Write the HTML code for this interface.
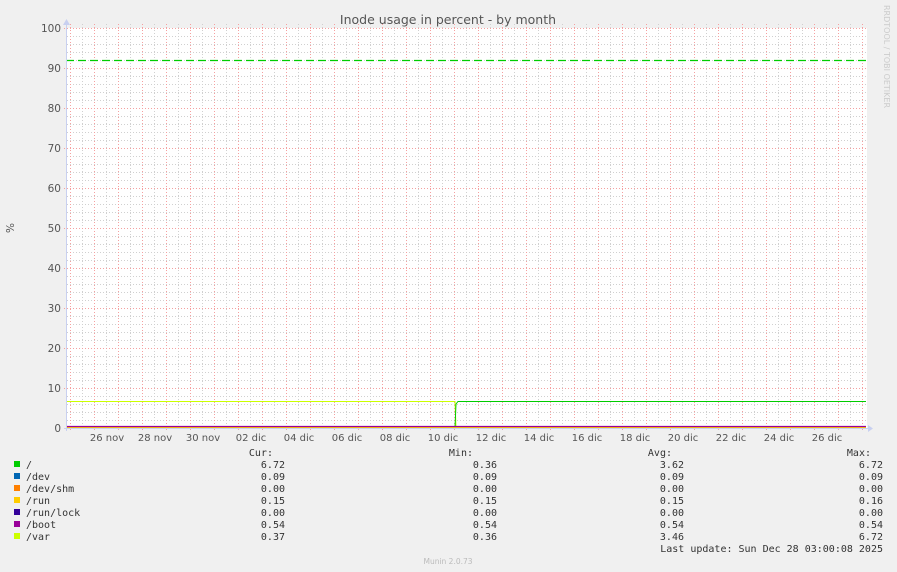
<!DOCTYPE html>
<html><head><meta charset="utf-8"><style>
html,body{margin:0;padding:0;background:#f0f0f0;width:897px;height:572px;overflow:hidden}
svg{display:block}
text{font-family:"DejaVu Sans","Liberation Sans",sans-serif}
.m text{font-family:"DejaVu Sans Mono","Liberation Mono",monospace;font-size:10px;fill:#333}
</style></head><body>
<svg width="897" height="572" viewBox="0 0 897 572" xmlns="http://www.w3.org/2000/svg">
<rect x="0" y="0" width="897" height="572" fill="#f0f0f0"/>
<rect x="67" y="28" width="800" height="400" fill="#ffffff"/>
<g stroke="#d0d0d0" stroke-width="1" stroke-dasharray="1,2">
<path d="M67 36.5H866M67 44.5H866M67 52.5H866M67 60.5H866M67 76.5H866M67 84.5H866M67 92.5H866M67 100.5H866M67 116.5H866M67 124.5H866M67 132.5H866M67 140.5H866M67 156.5H866M67 164.5H866M67 172.5H866M67 180.5H866M67 196.5H866M67 204.5H866M67 212.5H866M67 220.5H866M67 236.5H866M67 244.5H866M67 252.5H866M67 260.5H866M67 276.5H866M67 284.5H866M67 292.5H866M67 300.5H866M67 316.5H866M67 324.5H866M67 332.5H866M67 340.5H866M67 356.5H866M67 364.5H866M67 372.5H866M67 380.5H866M67 396.5H866M67 404.5H866M67 412.5H866M67 420.5H866"/>
<path d="M82.5 24V428M106.5 24V428M130.5 24V428M154.5 24V428M178.5 24V428M202.5 24V428M226.5 24V428M250.5 24V428M274.5 24V428M298.5 24V428M322.5 24V428M346.5 24V428M370.5 24V428M394.5 24V428M418.5 24V428M442.5 24V428M466.5 24V428M490.5 24V428M514.5 24V428M538.5 24V428M562.5 24V428M586.5 24V428M610.5 24V428M634.5 24V428M658.5 24V428M682.5 24V428M706.5 24V428M730.5 24V428M754.5 24V428M778.5 24V428M802.5 24V428M826.5 24V428M850.5 24V428"/>
</g>
<g stroke="#f5a0a0" stroke-width="1" stroke-dasharray="1,2">
<path d="M64 28.5H866M64 68.5H866M64 108.5H866M64 148.5H866M64 188.5H866M64 228.5H866M64 268.5H866M64 308.5H866M64 348.5H866M64 388.5H866"/>
<path d="M70.5 24V431M94.5 24V431M118.5 24V431M142.5 24V431M166.5 24V431M190.5 24V431M214.5 24V431M238.5 24V431M262.5 24V431M286.5 24V431M310.5 24V431M334.5 24V431M358.5 24V431M382.5 24V431M406.5 24V431M430.5 24V431M454.5 24V431M478.5 24V431M502.5 24V431M526.5 24V431M550.5 24V431M574.5 24V431M598.5 24V431M622.5 24V431M646.5 24V431M670.5 24V431M694.5 24V431M718.5 24V431M742.5 24V431M766.5 24V431M790.5 24V431M814.5 24V431M838.5 24V431M862.5 24V431"/>
</g>
<path d="M66 60.5H866" stroke="#00cc00" stroke-width="1.2" stroke-dasharray="8,4"/>
<path d="M67 401.5H455L456 427.5" stroke="#ccff00" stroke-width="1" fill="none"/>
<path d="M455 427L456 404L458 401.5H866" stroke="#00cc00" stroke-width="1" fill="none"/>
<path d="M67 427.5H866" stroke="#ffcc00" stroke-width="1"/>
<path d="M67 426.5H866" stroke="#990099" stroke-width="1.2"/>
<path d="M66.5 24V431M64 428.5H870" stroke="#c8d0f0" stroke-width="1"/>
<path d="M63 25L66.5 19L70 25Z M868 425L873 428.5L868 432Z" fill="#c8d0f0"/>
<text x="448" y="24" text-anchor="middle" font-size="12.5" fill="#555">Inode usage in percent - by month</text>
<g font-size="10.5" fill="#555" text-anchor="end">
<text x="61" y="32">100</text><text x="61" y="72">90</text><text x="61" y="112">80</text><text x="61" y="152">70</text><text x="61" y="192">60</text><text x="61" y="232">50</text><text x="61" y="272">40</text><text x="61" y="312">30</text><text x="61" y="352">20</text><text x="61" y="392">10</text><text x="61" y="432">0</text>
</g>
<text transform="translate(14,228) rotate(-90)" text-anchor="middle" font-size="10.5" fill="#555">%</text>
<g font-size="10" fill="#555" text-anchor="middle">
<text x="107" y="441">26 nov</text><text x="155" y="441">28 nov</text><text x="203" y="441">30 nov</text><text x="251" y="441">02 dic</text><text x="299" y="441">04 dic</text><text x="347" y="441">06 dic</text><text x="395" y="441">08 dic</text><text x="443" y="441">10 dic</text><text x="491" y="441">12 dic</text><text x="539" y="441">14 dic</text><text x="587" y="441">16 dic</text><text x="635" y="441">18 dic</text><text x="683" y="441">20 dic</text><text x="731" y="441">22 dic</text><text x="779" y="441">24 dic</text><text x="827" y="441">26 dic</text>
</g>
<text transform="translate(884,5) rotate(90)" font-size="8" fill="#ccc">RRDTOOL / TOBI OETIKER</text>
<g>
<rect x="14" y="461" width="6" height="6" fill="#00cc00"/>
<rect x="14" y="473" width="6" height="6" fill="#0066b3"/>
<rect x="14" y="485" width="6" height="6" fill="#ff8000"/>
<rect x="14" y="497" width="6" height="6" fill="#ffcc00"/>
<rect x="14" y="509" width="6" height="6" fill="#330099"/>
<rect x="14" y="521" width="6" height="6" fill="#990099"/>
<rect x="14" y="533" width="6" height="6" fill="#ccff00"/>
</g>
<g class="m">
<text x="26" y="468">/</text><text x="26" y="480">/dev</text><text x="26" y="492">/dev/shm</text><text x="26" y="504">/run</text><text x="26" y="516">/run/lock</text><text x="26" y="528">/boot</text><text x="26" y="540">/var</text>
</g>
<g class="m" text-anchor="end">
<text x="273" y="456">Cur:</text><text x="473" y="456">Min:</text><text x="672" y="456">Avg:</text><text x="871" y="456">Max:</text>
<text x="285" y="468">6.72</text><text x="285" y="480">0.09</text><text x="285" y="492">0.00</text><text x="285" y="504">0.15</text><text x="285" y="516">0.00</text><text x="285" y="528">0.54</text><text x="285" y="540">0.37</text>
<text x="497" y="468">0.36</text><text x="497" y="480">0.09</text><text x="497" y="492">0.00</text><text x="497" y="504">0.15</text><text x="497" y="516">0.00</text><text x="497" y="528">0.54</text><text x="497" y="540">0.36</text>
<text x="684" y="468">3.62</text><text x="684" y="480">0.09</text><text x="684" y="492">0.00</text><text x="684" y="504">0.15</text><text x="684" y="516">0.00</text><text x="684" y="528">0.54</text><text x="684" y="540">3.46</text>
<text x="883" y="468">6.72</text><text x="883" y="480">0.09</text><text x="883" y="492">0.00</text><text x="883" y="504">0.16</text><text x="883" y="516">0.00</text><text x="883" y="528">0.54</text><text x="883" y="540">6.72</text>
<text x="883" y="552">Last update: Sun Dec 28 03:00:08 2025</text>
</g>
<text x="448" y="564" text-anchor="middle" font-size="7.5" fill="#bbb">Munin 2.0.73</text>
</svg>
</body></html>
